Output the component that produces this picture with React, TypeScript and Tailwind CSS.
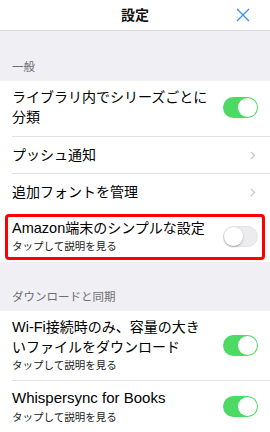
import React from 'react';

const font = { fontFamily: '"Liberation Sans", "Noto Sans CJK JP", sans-serif' };

const Toggle: React.FC<{ on: boolean }> = ({ on }) => (
  <div
    className={
      on
        ? 'relative h-[21px] w-[35px] shrink-0 rounded-full bg-[#4cd964]'
        : 'relative h-[21px] w-[35px] shrink-0 rounded-full border border-[#e3e3e6] bg-[#ececee]'
    }
  >
    <div
      className={
        on
          ? 'absolute right-[1px] top-[1px] h-[19px] w-[19px] rounded-full bg-white'
          : 'absolute left-0 top-0 h-[19px] w-[19px] rounded-full bg-white shadow-[0_1px_2px_rgba(0,0,0,0.3)]'
      }
    />
  </div>
);

const Chevron = () => (
  <svg width="6" height="9" viewBox="0 0 6 9" className="shrink-0">
    <path d="M1 1l3.5 3.5L1 8" fill="none" stroke="#c7c7cc" strokeWidth="1.2" />
  </svg>
);

const Sub = ({ children }: { children: React.ReactNode }) => (
  <div className="text-[10.5px] leading-[16px] text-[#222]">{children}</div>
);

const SectionHeader = ({ label, top }: { label: string; top: string }) => (
  <div className={`bg-[#efeff4] px-3 pb-[7px] ${top} text-[11.5px] leading-[14px] text-[#6d6d72]`}>
    {label}
  </div>
);

export default function App() {
  return (
    <div className="flex h-[432px] w-[270px] flex-col overflow-hidden bg-[#efeff4] text-black" style={font}>
      {/* header */}
      <div className="relative flex h-[31px] shrink-0 items-center justify-center border-b border-[#d9d9dc] bg-white">
        <span className="text-[14px] font-bold text-[#111]">設定</span>
        <svg width="14" height="14" viewBox="0 0 14 14" className="absolute left-[236px] top-[8px]">
          <path d="M1 1l12 12M13 1L1 13" stroke="#3a8ef0" strokeWidth="1.3" fill="none" />
        </svg>
      </div>

      <SectionHeader label="一般" top="pt-[29px]" />

      <div className="bg-white">
        <div className="pl-3">
          <div className="flex items-center justify-between border-b border-[#e2e2e4] pb-[9px] pr-3 pt-[6px]">
            <div className="text-[14px] leading-[20px]">
              ライブラリ内でシリーズごとに
              <br />
              分類
            </div>
            <Toggle on />
          </div>
        </div>
        <div className="pl-3">
          <div className="flex h-[37px] items-center justify-between border-b border-[#e2e2e4] pr-[14px]">
            <span className="text-[14px]">プッシュ通知</span>
            <Chevron />
          </div>
        </div>
        <div className="pl-3">
          <div className="flex h-[36px] items-center justify-between pr-[14px]">
            <span className="text-[14px]">追加フォントを管理</span>
            <Chevron />
          </div>
        </div>
        <div className="px-[5px] pb-[2px] pt-[4px]">
          <div className="flex items-center justify-between rounded-[4px] border-[3px] border-[#ff0000] pb-[3px] pl-[4px] pr-[4px] pt-[1px]">
            <div>
              <div className="text-[14px] leading-[20px]">
                <span className="text-[14.5px]">Amazon</span>端末のシンプルな設定
              </div>
              <Sub>タップして説明を見る</Sub>
            </div>
            <Toggle on={false} />
          </div>
        </div>
      </div>

      <SectionHeader label="ダウンロードと同期" top="pt-[28px]" />

      <div className="flex-1 bg-white">
        <div className="pl-3">
          <div className="flex items-center justify-between border-b border-[#e2e2e4] pb-[7px] pr-3 pt-[6px]">
            <div>
              <div className="text-[14px] leading-[20px]">
                <span className="text-[14.5px]">Wi-Fi</span>接続時のみ、容量の大き
                <br />
                いファイルをダウンロード
              </div>
              <Sub>タップして説明を見る</Sub>
            </div>
            <Toggle on />
          </div>
        </div>
        <div className="pl-3">
          <div className="flex items-center justify-between pb-[9px] pr-3 pt-[7px]">
            <div>
              <div className="text-[15px] leading-[20px]">Whispersync for Books</div>
              <div className="mt-[1px]">
                <Sub>タップして説明を見る</Sub>
              </div>
            </div>
            <Toggle on />
          </div>
        </div>
      </div>
    </div>
  );
}
